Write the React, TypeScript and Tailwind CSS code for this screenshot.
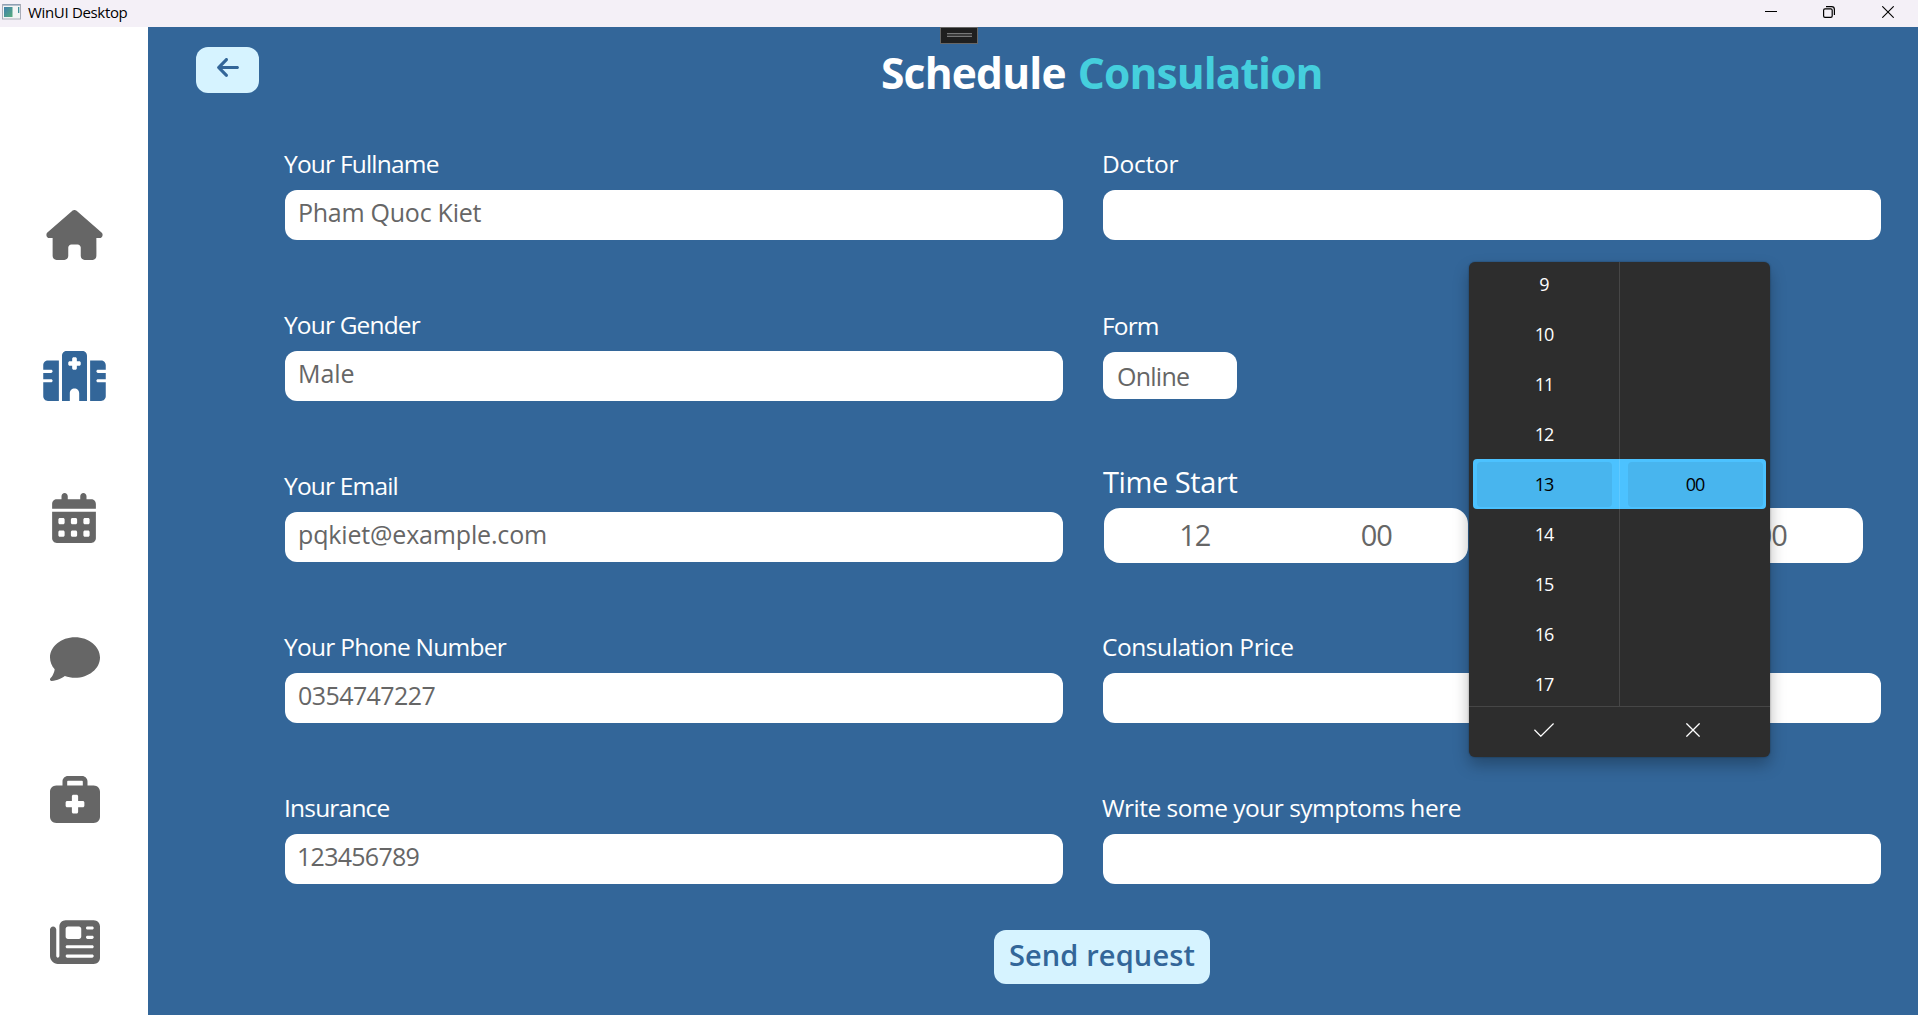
import React from "react";
import {
  FaHouse,
  FaHospital,
  FaCalendarDays,
  FaComment,
  FaBriefcaseMedical,
  FaNewspaper,
  FaArrowLeft,
} from "react-icons/fa6";

function TitleBar() {
  return (
    <div className="flex h-[27px] shrink-0 items-center bg-[#f4f0f7] text-black">
      <svg className="ml-[2px] mb-[3px] h-4 w-[19px]" viewBox="0 0 19 16">
        <rect x="0.5" y="0.5" width="18" height="14.5" fill="#f3f5f5" stroke="#a9adb8" />
        <rect x="1" y="0" width="17" height="1.6" fill="#8fa0b4" />
        <defs>
          <linearGradient id="pane" x1="0" y1="0" x2="1" y2="1">
            <stop offset="0" stopColor="#3f7fae" />
            <stop offset="1" stopColor="#57ad7c" />
          </linearGradient>
        </defs>
        <rect x="2" y="3" width="8.5" height="10" fill="url(#pane)" />
        <rect x="16" y="3" width="1.3" height="6" fill="#3f8f9a" />
      </svg>
      <span className="ml-[7px] mb-[3px] text-[15px] leading-5 tracking-[-0.33px]">WinUI Desktop</span>
      <div className="ml-auto mr-6 mb-[3px] flex items-center">
        <svg className="h-3 w-3" viewBox="0 0 12 12" fill="none" stroke="#000">
          <path d="M0 5.5h12" />
        </svg>
        <svg className="ml-[46px] h-3 w-3" viewBox="0 0 12 12" fill="none" stroke="#000" strokeWidth="1.2">
          <rect x="0.6" y="2.8" width="8.6" height="8.6" rx="1.4" />
          <path d="M3 0.6h5.6a2.8 2.8 0 0 1 2.8 2.8V9" />
        </svg>
        <svg className="ml-[47px] h-3 w-3" viewBox="0 0 12 12" fill="none" stroke="#000" strokeWidth="1.1">
          <path d="M0.3 0.3l11.4 11.4M11.7 0.3L0.3 11.7" />
        </svg>
      </div>
    </div>
  );
}

function Sidebar() {
  return (
    <nav className="flex w-[148px] shrink-0 flex-col items-center gap-[91.5px] bg-white pt-[182.5px] pl-px text-[50px] text-[#666666]">
      <FaHouse className="h-[50px] w-[57px] shrink-0" />
      <FaHospital className="h-[50px] w-[63px] shrink-0 text-[#336699]" />
      <FaCalendarDays className="mr-px h-[50px] w-11 shrink-0" />
      <FaComment className="h-[50px] w-[50px] shrink-0" />
      <FaBriefcaseMedical className="h-[50px] w-[50px] shrink-0" />
      <FaNewspaper className="h-[50px] w-[50px] shrink-0" />
    </nav>
  );
}

type FieldProps = { label: string; labelClass: string; value?: string; valueClass?: string };

function Field({ label, labelClass, value = "", valueClass = "" }: FieldProps) {
  return (
    <div className="h-[161px]">
      <div className={`-ml-px h-8 text-[24.5px] leading-8 whitespace-nowrap text-white ${labelClass}`}>{label}</div>
      <div className="mt-[10px] flex h-[49.5px] items-center rounded-xl bg-white pb-[5px] pl-[13px] text-[25px] leading-8 text-[#666666]">
        <span className={valueClass}>{value}</span>
      </div>
    </div>
  );
}

function TimeField({ hour, minute }: { hour: string; minute: string }) {
  return (
    <div className="flex h-[54.5px] w-[364px] items-center rounded-2xl bg-white pr-px text-center text-[29px] leading-9 tracking-[-1px] text-[#666666]">
      <span className="flex-1">{hour}</span>
      <span className="flex-1">{minute}</span>
    </div>
  );
}

const hours = ["9", "10", "11", "12", "13", "14", "15", "16", "17"];

function TimePicker() {
  return (
    <div className="absolute top-[262px] left-[1469px] flex h-[495px] w-[301px] flex-col rounded-md bg-[#2d2d2d] text-[18px] tracking-[-1px] text-white shadow-[0_8px_16px_rgba(0,0,0,0.28),0_0_2px_rgba(0,0,0,0.4)]">
      <div className="relative flex h-[444px]">
        <div className="absolute top-[197px] left-1 flex h-[50px] w-[293px] items-center justify-between rounded bg-[#4cc2ff] pr-[3px] pl-1">
          <div className="h-[45px] w-[135px] rounded-sm bg-[#48b5ee]" />
          <div className="h-[45px] w-[135px] rounded-sm bg-[#48b5ee]" />
        </div>
        <div className="relative w-[151px] border-r border-white/12 text-center">
          {hours.map((h) => (
            <div key={h} className={h === "13" ? "h-[50px] leading-[45px] text-black" : "h-[50px] leading-[45px]"}>
              {h}
            </div>
          ))}
        </div>
        <div className="relative flex-1 pt-[200px] text-center leading-[45px] text-black">00</div>
      </div>
      <div className="flex h-[51px] items-center border-t border-white/12">
        <div className="flex flex-1 justify-center">
          <svg className="mb-[5px] h-[14px] w-5" viewBox="0 0 20 14" fill="none" stroke="#fff" strokeWidth="1.3">
            <path d="M0.4 6.8l6.4 6.4L19.6 0.5" />
          </svg>
        </div>
        <div className="flex flex-1 justify-center">
          <svg className="mr-[3px] mb-[5px] h-[14px] w-[14px]" viewBox="0 0 14 14" fill="none" stroke="#fff" strokeWidth="1.3">
            <path d="M0.4 0.4l13.2 13.2M13.6 0.4L0.4 13.6" />
          </svg>
        </div>
      </div>
    </div>
  );
}

export default function App() {
  return (
    <div className="relative flex h-[1015px] w-[1918px] flex-col overflow-hidden bg-[#336699] font-['Open_Sans',sans-serif]">
      <TitleBar />
      <div className="flex min-h-0 flex-1">
        <Sidebar />
        <main className="flex flex-1 flex-col">
          <header className="flex h-[91px] shrink-0 pl-12">
            <button className="mt-5 flex h-[46px] w-[63px] items-center justify-center rounded-xl bg-[#d6f3ff] pb-[5px] text-[#336699]">
              <FaArrowLeft className="h-[25px] w-[22px]" />
            </button>
            <h1 className="ml-[622px] flex gap-3 text-[42.5px] leading-[91px] font-bold">
              <span className="tracking-[-0.8px] text-white">Schedule</span>
              <span className="tracking-[-0.9px] text-[#45cfdd]">Consulation</span>
            </h1>
          </header>
          <div className="mt-[30px] ml-[137px] grid w-[1596px] grid-cols-2 gap-x-10">
            <Field label="Your Fullname" labelClass="tracking-[-0.79px]" value="Pham Quoc Kiet" valueClass="tracking-[-0.26px]" />
            <Field label="Doctor" labelClass="tracking-[-0.25px]" />
            <Field label="Your Gender" labelClass="tracking-[-0.84px]" value="Male" valueClass="tracking-[-0.1px]" />
            <div className="pt-px">
              <div className="-ml-px h-8 text-[24.5px] leading-8 tracking-[-0.85px] text-white">Form</div>
              <div className="mt-[10px] flex h-[47px] w-[134px] items-center rounded-xl bg-white pl-[14px] text-[25px] leading-8 tracking-[-0.75px] text-[#666666]">
                Online
              </div>
            </div>
            <Field label="Your Email" labelClass="tracking-[-0.82px]" value="pqkiet@example.com" valueClass="tracking-[-0.16px]" />
            <div>
              <div className="h-6 text-[29px] leading-6 tracking-[-0.42px] text-white">Time Start</div>
              <div className="mt-[14px] ml-px flex gap-[31px]">
                <TimeField hour="12" minute="00" />
                <TimeField hour="13" minute="00" />
              </div>
            </div>
            <Field label="Your Phone Number" labelClass="tracking-[-0.72px]" value="0354747227" valueClass="tracking-[-0.57px]" />
            <Field label="Consulation Price" labelClass="tracking-[-0.45px]" />
            <Field label="Insurance" labelClass="tracking-[-0.8px]" value="123456789" valueClass="-ml-px tracking-[-0.72px]" />
            <Field label="Write some your symptoms here" labelClass="tracking-[-0.51px]" />
          </div>
          <button className="mt-[-23px] ml-[846px] h-[54px] w-[216px] rounded-xl bg-[#d6f3ff] pb-1 text-[29px] leading-[50px] font-semibold tracking-[0.12px] whitespace-nowrap text-[#336699]">
            Send request
          </button>
        </main>
      </div>
      <div className="absolute top-[27px] left-[940px] flex h-[17px] w-[38px] items-start justify-center border border-[#666666] bg-[#1f1f1f] pt-[5px]">
        <div className="h-1 w-[25px] border-y border-[#777777] bg-[#3a3a3a]" />
      </div>
      <TimePicker />
    </div>
  );
}
